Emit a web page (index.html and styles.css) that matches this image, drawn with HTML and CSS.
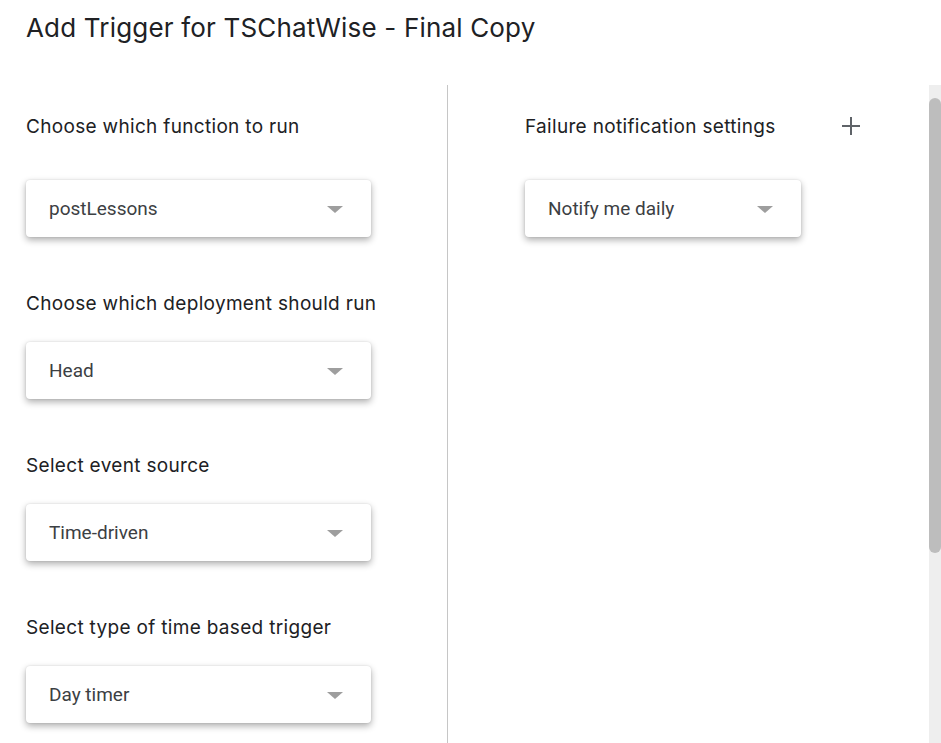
FILE: index.html
```html
<!DOCTYPE html>
<html>
<head>
<meta charset="utf-8">
<link rel="stylesheet" href="styles.css">
</head>
<body>
<div class="page">
  <h1 class="title">Add Trigger for TSChatWise - Final Copy</h1>
  <div class="content">
    <div class="col-left">
      <div class="field field-first">
        <div class="label">Choose which function to run</div>
        <div class="select"><span>postLessons</span><span class="arrow"></span></div>
      </div>
      <div class="field">
        <div class="label">Choose which deployment should run</div>
        <div class="select"><span>Head</span><span class="arrow"></span></div>
      </div>
      <div class="field">
        <div class="label">Select event source</div>
        <div class="select"><span>Time-driven</span><span class="arrow"></span></div>
      </div>
      <div class="field">
        <div class="label">Select type of time based trigger</div>
        <div class="select"><span>Day timer</span><span class="arrow"></span></div>
      </div>
    </div>
    <div class="col-right">
      <div class="field field-first">
        <div class="label-row">
          <div class="label">Failure notification settings</div>
          <svg class="plus" width="20" height="20" viewBox="0 0 20 20"><path d="M10 1v18M1 10h18" stroke="#5f6368" stroke-width="2" fill="none"/></svg>
        </div>
        <div class="select select-narrow"><span>Notify me daily</span><span class="arrow"></span></div>
      </div>
    </div>
    <div class="scrollbar"><div class="thumb"></div></div>
  </div>
</div>
</body>
</html>
```
FILE: styles.css
```css
html, body {
  margin: 0;
  padding: 0;
  background: #fff;
}
.page {
  width: 941px;
  height: 743px;
  display: flex;
  flex-direction: column;
  overflow: hidden;
}
.title {
  margin: 0;
  padding: 11px 0 0 26px;
  height: 74px;
  font-family: Inter, sans-serif;
  font-weight: 400;
  font-size: 26px;
  line-height: 34px;
  letter-spacing: 0.18px;
  color: #202124;
}
.content {
  flex: 1;
  display: flex;
}
.col-left {
  width: 421px;
  padding-left: 26px;
  border-right: 1px solid #c6c6c6;
}
.col-right {
  flex: 1;
  padding-left: 77px;
}
.field {
  display: flex;
  flex-direction: column;
  margin-top: 55px;
}
.field .label {
  margin-bottom: 26px;
}
.field-first {
  margin-top: 30px;
}
.field-first .label {
  margin-bottom: 41px;
}
.label {
  font-family: Inter, sans-serif;
  font-size: 19px;
  line-height: 24px;
  letter-spacing: 0.32px;
  color: #202124;
}
.label-row {
  display: flex;
  align-items: flex-start;
  width: 336px;
  justify-content: space-between;
}
.label-row .label {
  margin-bottom: 41px;
}
.plus {
  margin-top: 1px;
}
.select {
  width: 345px;
  height: 57px;
  box-sizing: border-box;
  padding: 0 28px 0 23px;
  display: flex;
  align-items: center;
  justify-content: space-between;
  background: #fff;
  border-radius: 4px;
  box-shadow: 0 3px 7px rgba(0,0,0,0.32), 0 0 2px rgba(0,0,0,0.12);
  font-family: Roboto, sans-serif;
  font-size: 19px;
  color: #3c4043;
}
.select-narrow {
  width: 276px;
}
.arrow {
  width: 0;
  height: 0;
  border-left: 8px solid transparent;
  border-right: 8px solid transparent;
  border-top: 7px solid #9e9e9e;
  margin-top: 2px;
}
.scrollbar {
  width: 12px;
  background: #eeeeee;
  padding-top: 13px;
}
.thumb {
  width: 12px;
  height: 455px;
  background: #bdbdbd;
  border-radius: 6px;
}
```
